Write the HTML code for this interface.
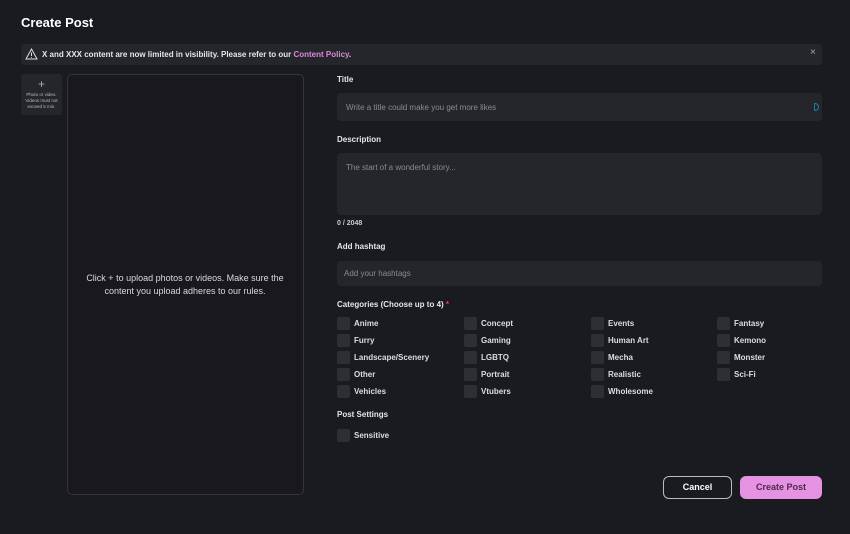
<!DOCTYPE html>
<html><head><style>
*{box-sizing:border-box;margin:0;padding:0}
body{width:850px;height:534px;background:#1a1a21;font-family:"Liberation Sans",sans-serif;color:#e8e8ea;position:relative;overflow:hidden}
.a{position:absolute}
.lbl{font-size:8px;font-weight:bold;color:#e6e6e8}
.inp{background:#25262c;border-radius:4px;color:#8a8b90;font-size:8px}
.cb{width:13px;height:13px;background:#2e2f35;border-radius:2px}
.ct{font-size:8px;font-weight:bold;color:#dcdce0}
</style></head><body>
<div class="a" style="left:21px;top:15px;font-size:13px;font-weight:bold;color:#fff">Create Post</div>
<div class="a" style="left:21px;top:44px;width:801px;height:21px;background:#25262c;border-radius:3px"></div>
<svg class="a" style="left:25px;top:48px" width="13" height="12" viewBox="0 0 13 12"><path d="M6.5 1L12 11H1Z" fill="none" stroke="#ddd" stroke-width="1"/><path d="M6.5 4.5v3.5M6.5 9v0.8" stroke="#ddd" stroke-width="1"/></svg>
<div class="a" style="left:42px;top:50px;font-size:8px;font-weight:bold;color:#e6e6e8">X and XXX content are now limited in visibility. Please refer to our <span style="color:#d88ad8">Content Policy</span>.</div>
<div class="a" style="left:810px;top:47px;font-size:10px;color:#aaa">×</div>
<div class="a" style="left:21px;top:74px;width:41px;height:41px;background:#25262c;border-radius:3px;text-align:center">
<div style="font-size:12px;color:#aaa;line-height:12px;margin-top:4px">+</div>
<div style="font-size:4.5px;color:#bbb;line-height:6px;margin-top:2px">Photo or video.<br>Videos must not<br>exceed 5 min.</div></div>
<div class="a" style="left:67px;top:74px;width:237px;height:421px;border:1px solid #34353b;border-radius:5px;background:#18181e"></div>
<div class="a" style="left:80px;top:272px;width:210px;text-align:center;font-size:9px;line-height:13px;color:#d8d8dc">Click + to upload photos or videos. Make sure the content you upload adheres to our rules.</div>

<div class="a lbl" style="left:337px;top:75px">Title</div>
<div class="a inp" style="left:337px;top:93px;width:485px;height:28px;padding:10px 9px">Write a title could make you get more likes</div>
<div class="a" style="left:814px;top:103px;width:5px;height:8px;border:1.5px solid #2a7a8a;border-radius:0 4px 4px 0"></div>
<div class="a lbl" style="left:337px;top:135px">Description</div>
<div class="a inp" style="left:337px;top:153px;width:485px;height:62px;padding:10px 9px">The start of a wonderful story...</div>
<div class="a" style="left:337px;top:220px;font-size:7px;font-weight:bold;color:#ccc">0 / 2048</div>
<div class="a lbl" style="left:337px;top:242px">Add hashtag</div>
<div class="a inp" style="left:337px;top:261px;width:485px;height:25px;padding:8px 7px">Add your hashtags</div>
<div class="a lbl" style="left:337px;top:300px">Categories (Choose up to 4) <span style="color:#e04050">*</span></div>

<div class="a" style="left:337px;top:317px;display:grid;grid-template-columns:127px 127px 126px 100px;row-gap:4px">
<script>
var c=["Anime","Concept","Events","Fantasy","Furry","Gaming","Human Art","Kemono","Landscape/Scenery","LGBTQ","Mecha","Monster","Other","Portrait","Realistic","Sci-Fi","Vehicles","Vtubers","Wholesome"];
c.forEach(function(t){document.write('<div style="display:flex;align-items:center;height:13px"><div class="cb"></div><span class="ct" style="margin-left:4px">'+t+'</span></div>')});
</script>
</div>
<div class="a lbl" style="left:337px;top:410px">Post Settings</div>
<div class="a" style="left:337px;top:429px;display:flex;align-items:center"><div class="cb"></div><span class="ct" style="margin-left:4px">Sensitive</span></div>

<div class="a" style="left:663px;top:476px;width:69px;height:23px;border:1px solid #bbb;border-radius:6px;text-align:center;line-height:21px;font-size:9px;font-weight:bold;color:#fff">Cancel</div>
<div class="a" style="left:740px;top:476px;width:82px;height:23px;background:#e592e2;border-radius:6px;text-align:center;line-height:23px;font-size:9px;font-weight:bold;color:#4a2a4a">Create Post</div>
</body></html>
